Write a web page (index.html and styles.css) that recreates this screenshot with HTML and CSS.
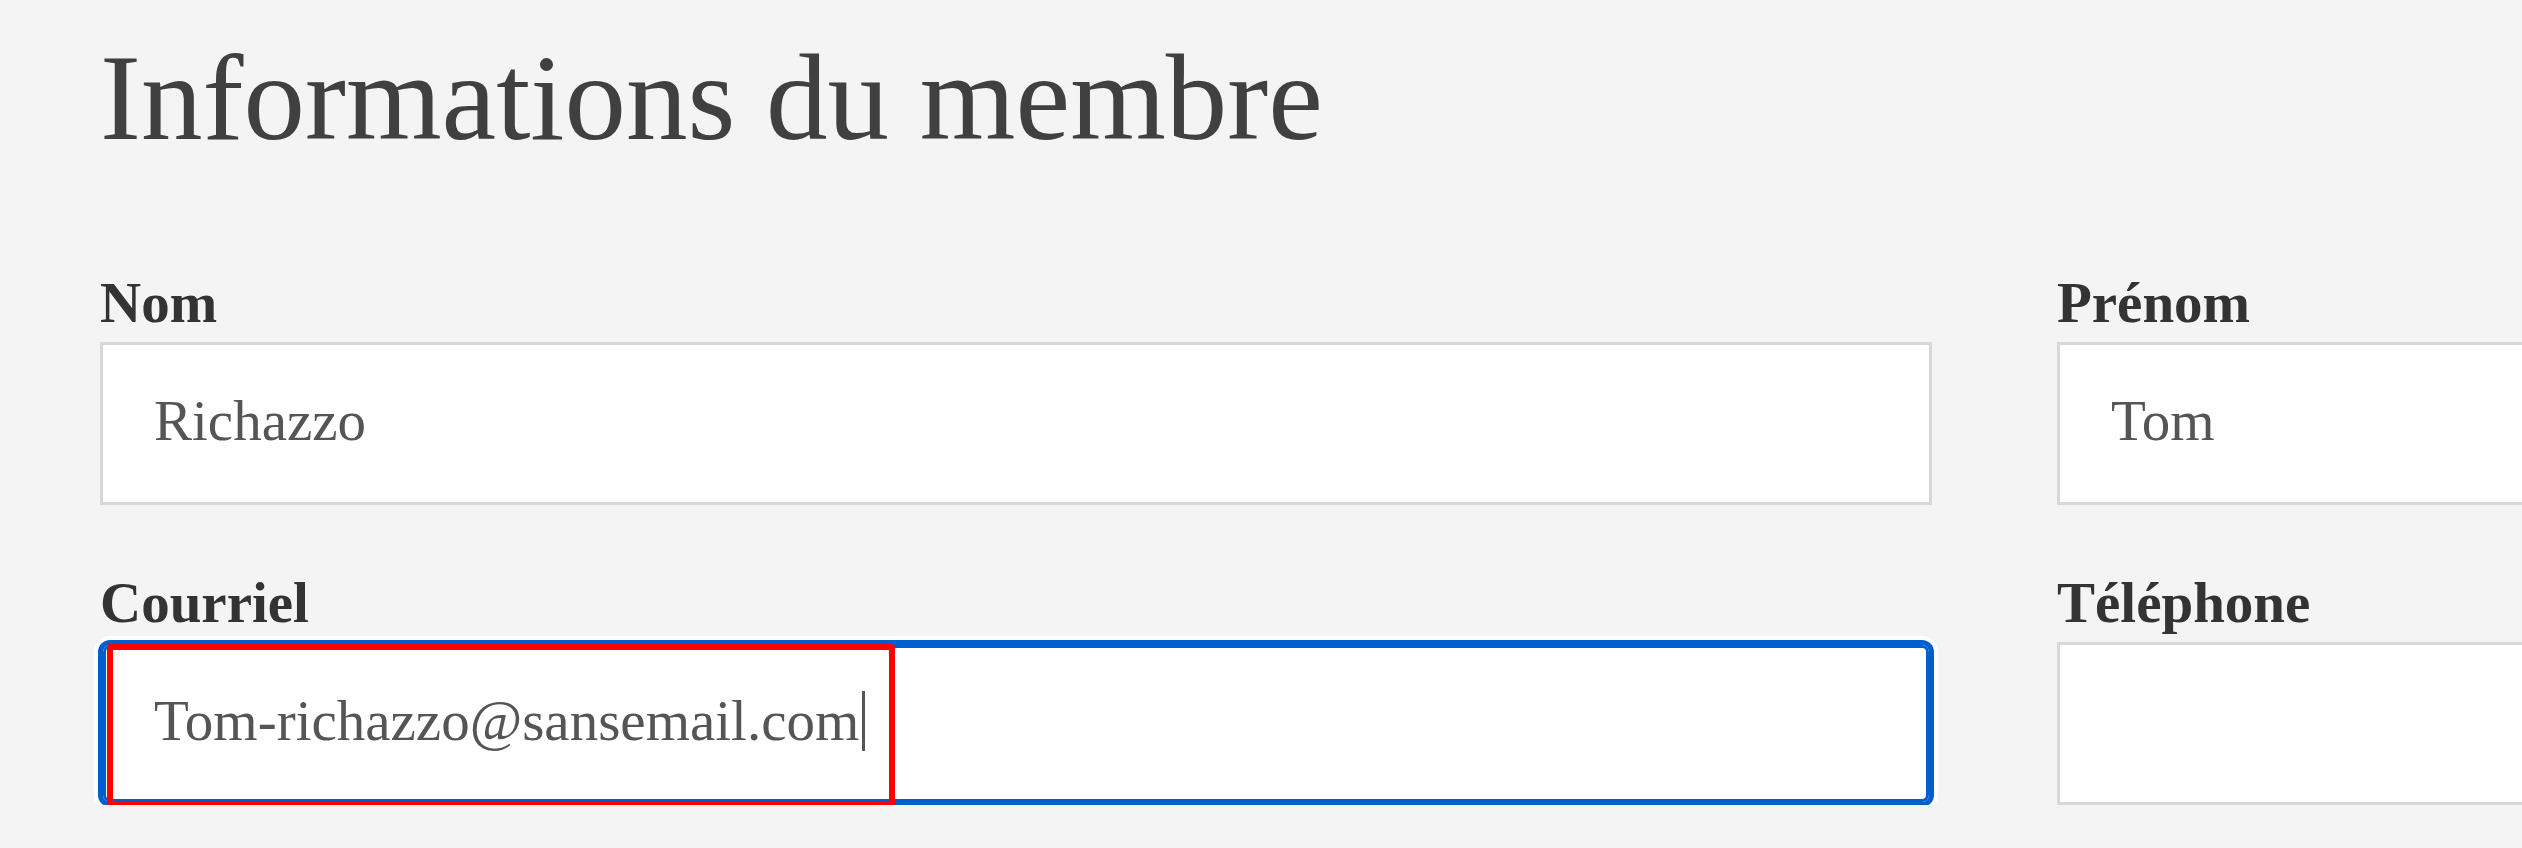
FILE: index.html
```html
<!DOCTYPE html>
<html lang="fr">
<head>
  <meta charset="UTF-8" />
  <meta name="viewport" content="width=device-width, initial-scale=1" />
  <title>Informations du membre</title>
  <link rel="stylesheet" href="styles.css">
</head>
<body>
  <main class="member-form">
    <h1 class="page-title">Informations du membre</h1>

    <div class="form-grid">
      <div class="field">
        <label class="field-label">Nom</label>
        <div class="field-input">Richazzo</div>
      </div>
      <div class="field">
        <label class="field-label">Prénom</label>
        <div class="field-input">Tom</div>
      </div>
      <div class="field">
        <label class="field-label">Courriel</label>
        <div class="field-input is-focused">
          Tom-richazzo@sansemail.com<span class="caret"></span>
          <div class="highlight-box"></div>
        </div>
      </div>
      <div class="field">
        <label class="field-label">Téléphone</label>
        <div class="field-input"></div>
      </div>
    </div>
  </main>
</body>
</html>
```

FILE: styles.css
```css
html, body {
  margin: 0;
  overflow: hidden;
  background: #f4f4f4;
  font-family: 'Liberation Serif', 'Times New Roman', serif;
}

.member-form {
  padding: 36px 0 0 100px;
}

.page-title {
  margin: 0 0 114px;
  font-size: 123px;
  line-height: 123px;
  font-weight: normal;
  color: #404040;
  white-space: nowrap;
}

.form-grid {
  display: grid;
  grid-template-columns: 1832px 1832px;
  column-gap: 125px;
  row-gap: 68px;
}

.field {
  display: flex;
  flex-direction: column;
}

.field-label {
  display: block;
  margin-bottom: 9px;
  font-size: 57px;
  line-height: 60px;
  font-weight: bold;
  color: #333;
}

.field-input {
  position: relative;
  display: flex;
  align-items: center;
  box-sizing: border-box;
  height: 163px;
  padding: 0 0 6px 51px;
  background: #fff;
  border: 3px solid #d8d8d8;
  font-size: 57px;
  color: #555;
  white-space: nowrap;
}

/* focus ring as the browser draws it */
.field-input.is-focused {
  border-color: #005fcc;
  border-radius: 10px;
  box-shadow: 0 0 0 2px #005fcc, 0 0 0 6px #fff, inset 0 0 0 3px #005fcc;
}

.caret {
  display: inline-block;
  width: 3px;
  height: 60px;
  margin-left: 3px;
  background: #555;
  vertical-align: -12px;
}

/* red annotation over the typed value */
.highlight-box {
  position: absolute;
  left: 4px;
  top: -1px;
  width: 788px;
  height: 163px;
  box-sizing: border-box;
  border: 6px solid #ff0000;
  border-radius: 4px;
}
```
